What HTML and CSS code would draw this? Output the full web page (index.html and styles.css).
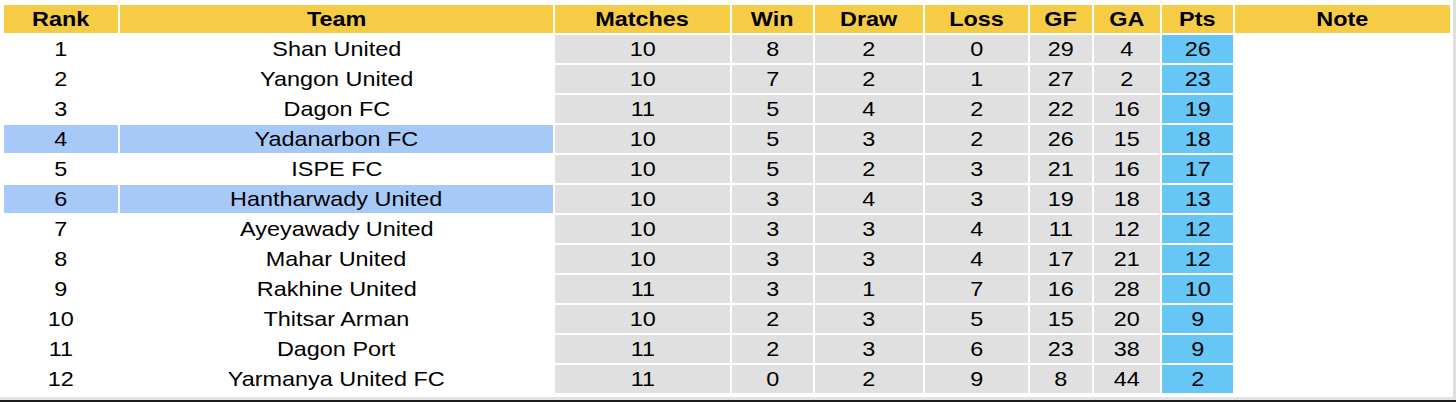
FILE: index.html
```html
<!DOCTYPE html>
<html>
<head>
<meta charset="utf-8">
<link rel="stylesheet" href="styles.css">
</head>
<body>
<div class="frame">
<table class="standings">
<colgroup>
<col class="w-rank"><col class="w-team"><col class="w-matches"><col class="w-win"><col class="w-draw"><col class="w-loss"><col class="w-gf"><col class="w-ga"><col class="w-pts"><col class="w-note">
</colgroup>
<thead>
<tr><th><span>Rank</span></th><th><span>Team</span></th><th><span>Matches</span></th><th><span>Win</span></th><th><span>Draw</span></th><th><span>Loss</span></th><th><span>GF</span></th><th><span>GA</span></th><th><span>Pts</span></th><th><span>Note</span></th></tr>
</thead>
<tbody>
<tr><td><span>1</span></td><td><span>Shan United</span></td><td class="g"><span>10</span></td><td class="g"><span>8</span></td><td class="g"><span>2</span></td><td class="g"><span>0</span></td><td class="g"><span>29</span></td><td class="g"><span>4</span></td><td class="p"><span>26</span></td><td></td></tr>
<tr><td><span>2</span></td><td><span>Yangon United</span></td><td class="g"><span>10</span></td><td class="g"><span>7</span></td><td class="g"><span>2</span></td><td class="g"><span>1</span></td><td class="g"><span>27</span></td><td class="g"><span>2</span></td><td class="p"><span>23</span></td><td></td></tr>
<tr><td><span>3</span></td><td><span>Dagon FC</span></td><td class="g"><span>11</span></td><td class="g"><span>5</span></td><td class="g"><span>4</span></td><td class="g"><span>2</span></td><td class="g"><span>22</span></td><td class="g"><span>16</span></td><td class="p"><span>19</span></td><td></td></tr>
<tr class="hl"><td><span>4</span></td><td><span>Yadanarbon FC</span></td><td class="g"><span>10</span></td><td class="g"><span>5</span></td><td class="g"><span>3</span></td><td class="g"><span>2</span></td><td class="g"><span>26</span></td><td class="g"><span>15</span></td><td class="p"><span>18</span></td><td></td></tr>
<tr><td><span>5</span></td><td><span>ISPE FC</span></td><td class="g"><span>10</span></td><td class="g"><span>5</span></td><td class="g"><span>2</span></td><td class="g"><span>3</span></td><td class="g"><span>21</span></td><td class="g"><span>16</span></td><td class="p"><span>17</span></td><td></td></tr>
<tr class="hl"><td><span>6</span></td><td><span>Hantharwady United</span></td><td class="g"><span>10</span></td><td class="g"><span>3</span></td><td class="g"><span>4</span></td><td class="g"><span>3</span></td><td class="g"><span>19</span></td><td class="g"><span>18</span></td><td class="p"><span>13</span></td><td></td></tr>
<tr><td><span>7</span></td><td><span>Ayeyawady United</span></td><td class="g"><span>10</span></td><td class="g"><span>3</span></td><td class="g"><span>3</span></td><td class="g"><span>4</span></td><td class="g"><span>11</span></td><td class="g"><span>12</span></td><td class="p"><span>12</span></td><td></td></tr>
<tr><td><span>8</span></td><td><span>Mahar United</span></td><td class="g"><span>10</span></td><td class="g"><span>3</span></td><td class="g"><span>3</span></td><td class="g"><span>4</span></td><td class="g"><span>17</span></td><td class="g"><span>21</span></td><td class="p"><span>12</span></td><td></td></tr>
<tr><td><span>9</span></td><td><span>Rakhine United</span></td><td class="g"><span>11</span></td><td class="g"><span>3</span></td><td class="g"><span>1</span></td><td class="g"><span>7</span></td><td class="g"><span>16</span></td><td class="g"><span>28</span></td><td class="p"><span>10</span></td><td></td></tr>
<tr><td><span>10</span></td><td><span>Thitsar Arman</span></td><td class="g"><span>10</span></td><td class="g"><span>2</span></td><td class="g"><span>3</span></td><td class="g"><span>5</span></td><td class="g"><span>15</span></td><td class="g"><span>20</span></td><td class="p"><span>9</span></td><td></td></tr>
<tr><td><span>11</span></td><td><span>Dagon Port</span></td><td class="g"><span>11</span></td><td class="g"><span>2</span></td><td class="g"><span>3</span></td><td class="g"><span>6</span></td><td class="g"><span>23</span></td><td class="g"><span>38</span></td><td class="p"><span>9</span></td><td></td></tr>
<tr><td><span>12</span></td><td><span>Yarmanya United FC</span></td><td class="g"><span>11</span></td><td class="g"><span>0</span></td><td class="g"><span>2</span></td><td class="g"><span>9</span></td><td class="g"><span>8</span></td><td class="g"><span>44</span></td><td class="p"><span>2</span></td><td></td></tr>
</tbody>
</table>
</div>
<div class="rule"></div>
</body>
</html>
```
FILE: styles.css
```css
html, body {
  margin: 0;
  padding: 0;
  background: #ffffff;
}
body {
  font-family: "Liberation Sans", Arial, sans-serif;
  color: #000;
  width: 1456px;
  height: 402px;
  overflow: hidden;
}
.frame {
  box-sizing: border-box;
  height: 400px;
  border-right: 3px solid #dfdfdf;
  border-bottom: 3px solid #e3e3e3;
  padding: 3px 0 0 2px;
}
.rule {
  height: 2px;
  background: #1c1c1c;
}
.standings {
  table-layout: fixed;
  width: 1450px;
  border-collapse: separate;
  border-spacing: 2px;
  font-size: 21px;
}
.w-rank { width: 114px; }
.w-team { width: 433px; }
.w-matches { width: 175px; }
.w-win { width: 81px; }
.w-draw { width: 108px; }
.w-loss { width: 103px; }
.w-gf { width: 62px; }
.w-ga { width: 66px; }
.w-pts { width: 71px; }
.w-note { width: 215px; }
.standings th,
.standings td {
  height: 28px;
  padding: 0;
  text-align: center;
  vertical-align: middle;
  line-height: 28px;
  white-space: nowrap;
}
.standings th {
  background: #f6cc47;
  font-weight: bold;
}
.standings span {
  display: inline-block;
  transform: scaleX(1.115);
}
.standings td.g {
  background: #e0e0e0;
}
.standings td.p {
  background: #66c6f5;
}
.standings tr.hl td:nth-child(1),
.standings tr.hl td:nth-child(2) {
  background: #a6c9f8;
}
```
